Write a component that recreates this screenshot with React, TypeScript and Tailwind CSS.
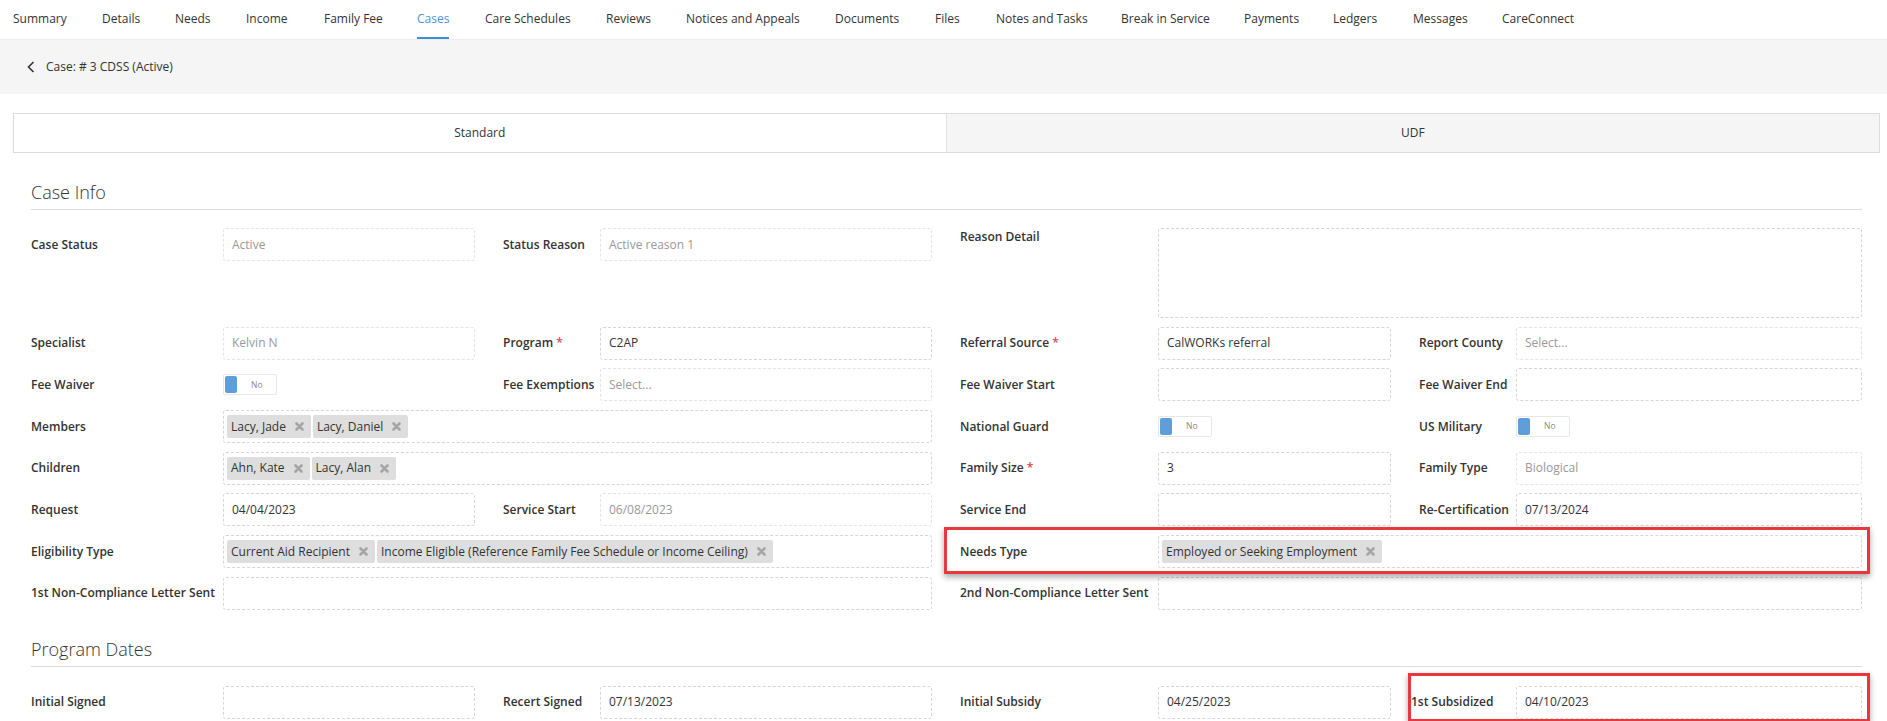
import type { ReactNode } from 'react';

type Tab = { name: string; w: string; active?: boolean };

const tabs: Tab[] = [
  { name: 'Summary', w: 'w-[89px]' },
  { name: 'Details', w: 'w-[73px]' },
  { name: 'Needs', w: 'w-[71px]' },
  { name: 'Income', w: 'w-[78px]' },
  { name: 'Family Fee', w: 'w-[93px]' },
  { name: 'Cases', w: 'w-[68px]', active: true },
  { name: 'Care Schedules', w: 'w-[121px]' },
  { name: 'Reviews', w: 'w-[80px]' },
  { name: 'Notices and Appeals', w: 'w-[149px]' },
  { name: 'Documents', w: 'w-[100px]' },
  { name: 'Files', w: 'w-[61px]' },
  { name: 'Notes and Tasks', w: 'w-[125px]' },
  { name: 'Break in Service', w: 'w-[123px]' },
  { name: 'Payments', w: 'w-[89px]' },
  { name: 'Ledgers', w: 'w-[80px]' },
  { name: 'Messages', w: 'w-[89px]' },
  { name: 'CareConnect', w: 'w-[100px]' },
];

function XIcon() {
  return (
    <svg width="9" height="9" viewBox="0 0 9 9" className="shrink-0">
      <path d="M1.5 1.5 L7.5 7.5 M7.5 1.5 L1.5 7.5" stroke="#a5a5a5" strokeWidth="2.6" strokeLinecap="round" />
    </svg>
  );
}

function Chip({ text }: { text: string }) {
  return (
    <span className="flex h-[23px] items-center gap-[9px] rounded-[2px] bg-[#dedede] pl-[4px] pr-[7px] whitespace-nowrap text-[#333]">
      {text}
      <XIcon />
    </span>
  );
}

function Toggle() {
  return (
    <div className="flex h-[21px] w-[54px] items-center rounded-[2px] border border-[#e8e8e8] bg-white">
      <span className="ml-[1px] h-[17px] w-[12px] rounded-[2px] bg-[#5f9ed8]" />
      <span className="ml-[14px] text-[8.5px] text-[#888]">No</span>
    </div>
  );
}

function Box({ children, muted, tall, chips }: { children?: ReactNode; muted?: boolean; tall?: boolean; chips?: boolean }) {
  return (
    <div
      className={`flex rounded-[3px] border border-dashed ${tall ? 'h-[90px] items-start' : 'h-[33px] items-center'} ${
        chips ? 'gap-[2px] pl-[3px]' : 'px-[8px]'
      } ${muted ? 'border-[#e4e4e4] text-[#999]' : 'border-[#d6d6d6] text-[#333]'}`}
    >
      {children}
    </div>
  );
}

function Field({
  label,
  lw,
  req,
  span,
  top,
  children,
}: {
  label: string;
  lw: string;
  req?: boolean;
  span?: boolean;
  top?: boolean;
  children?: ReactNode;
}) {
  return (
    <div className={`flex ${top ? 'items-start' : 'items-center'} ${span ? 'col-span-2' : ''}`}>
      <div className={`${lw} shrink-0 whitespace-nowrap font-semibold leading-[18px] text-[#333]`}>
        {label}
        {req && <span className="ml-[3px] text-[#e0474c]">*</span>}
      </div>
      <div className="min-w-0 flex-1">{children}</div>
    </div>
  );
}

function Section({ title }: { title: string }) {
  return (
    <div className="mt-[27px] border-b border-[#dcdcdc] pb-[4px] text-[18px] font-light leading-[25px] text-[#333]">
      {title}
    </div>
  );
}

const L1 = 'w-[192px]';
const L2 = 'w-[97px]';
const L3 = 'w-[198px]';

export default function App() {
  return (
    <div className="h-screen overflow-hidden bg-white font-['Open_Sans',sans-serif] text-[12px] text-[#333]">
      <nav className="flex h-[40px] items-stretch border-b border-[#ececec] pl-[13px]">
        {tabs.map((t) => (
          <div key={t.name} className={`${t.w} flex shrink-0 items-stretch`}>
            <span
              className={`flex items-center whitespace-nowrap border-b-2 pt-[1px] ${
                t.active ? 'border-[#3c8ddc] text-[#4a93e0]' : 'border-transparent text-[#333]'
              }`}
            >
              {t.name}
            </span>
          </div>
        ))}
      </nav>

      <div className="flex h-[54px] items-center bg-[#f5f5f5] pl-[27px]">
        <svg width="8" height="12" viewBox="0 0 8 12">
          <polyline points="6.5,1 1.5,6 6.5,11" fill="none" stroke="#333" strokeWidth="1.6" />
        </svg>
        <span className="ml-[11px]">Case: # 3 CDSS (Active)</span>
      </div>

      <div className="pl-[13px] pr-[7px] pt-[19px]">
        <div className="flex h-[40px] border border-[#dcdcdc]">
          <div className="flex w-1/2 items-center justify-center border-r border-[#e2e2e2] bg-white">Standard</div>
          <div className="flex flex-1 items-center justify-center bg-[#f5f5f5]">UDF</div>
        </div>

        <div className="px-[18px]">
          <Section title="Case Info" />

          <div className="mt-[18px] grid grid-cols-[444px_429px_431px_1fr] items-start gap-x-[28px] gap-y-[8.7px]">
            <Field label="Case Status" lw={L1}>
              <Box muted>Active</Box>
            </Field>
            <Field label="Status Reason" lw={L2}>
              <Box muted>Active reason 1</Box>
            </Field>
            <Field label="Reason Detail" lw={L3} span top>
              <Box tall />
            </Field>

            <Field label="Specialist" lw={L1}>
              <Box muted>Kelvin N</Box>
            </Field>
            <Field label="Program" lw={L2} req>
              <Box>C2AP</Box>
            </Field>
            <Field label="Referral Source" lw={L3} req>
              <Box>CalWORKs referral</Box>
            </Field>
            <Field label="Report County" lw={L2}>
              <Box muted>Select...</Box>
            </Field>

            <Field label="Fee Waiver" lw={L1}>
              <div className="flex h-[33px] items-center">
                <Toggle />
              </div>
            </Field>
            <Field label="Fee Exemptions" lw={L2}>
              <Box muted>Select...</Box>
            </Field>
            <Field label="Fee Waiver Start" lw={L3}>
              <Box />
            </Field>
            <Field label="Fee Waiver End" lw={L2}>
              <Box />
            </Field>

            <Field label="Members" lw={L1} span>
              <Box chips>
                <Chip text="Lacy, Jade" />
                <Chip text="Lacy, Daniel" />
              </Box>
            </Field>
            <Field label="National Guard" lw={L3}>
              <div className="flex h-[33px] items-center">
                <Toggle />
              </div>
            </Field>
            <Field label="US Military" lw={L2}>
              <div className="flex h-[33px] items-center">
                <Toggle />
              </div>
            </Field>

            <Field label="Children" lw={L1} span>
              <Box chips>
                <Chip text="Ahn, Kate" />
                <Chip text="Lacy, Alan" />
              </Box>
            </Field>
            <Field label="Family Size" lw={L3} req>
              <Box>3</Box>
            </Field>
            <Field label="Family Type" lw={L2}>
              <Box muted>Biological</Box>
            </Field>

            <Field label="Request" lw={L1}>
              <Box>04/04/2023</Box>
            </Field>
            <Field label="Service Start" lw={L2}>
              <Box muted>06/08/2023</Box>
            </Field>
            <Field label="Service End" lw={L3}>
              <Box />
            </Field>
            <Field label="Re-Certification" lw={L2}>
              <Box>07/13/2024</Box>
            </Field>

            <Field label="Eligibility Type" lw={L1} span>
              <Box chips>
                <Chip text="Current Aid Recipient" />
                <Chip text="Income Eligible (Reference Family Fee Schedule or Income Ceiling)" />
              </Box>
            </Field>
            <div className="relative col-span-2">
              <div className="pointer-events-none absolute -bottom-[6px] -left-[16px] -right-[8px] -top-[8px] border-[3px] border-[#e8383d] shadow-[0_3px_6px_rgba(0,0,0,0.35)]" />
              <Field label="Needs Type" lw={L3}>
                <Box chips>
                  <Chip text="Employed or Seeking Employment" />
                </Box>
              </Field>
            </div>

            <Field label="1st Non-Compliance Letter Sent" lw={L1} span>
              <Box />
            </Field>
            <Field label="2nd Non-Compliance Letter Sent" lw={L3} span>
              <Box />
            </Field>
          </div>

          <Section title="Program Dates" />

          <div className="mt-[19px] grid grid-cols-[444px_429px_431px_1fr] items-start gap-x-[28px] gap-y-[8.7px]">
            <Field label="Initial Signed" lw={L1}>
              <Box />
            </Field>
            <Field label="Recert Signed" lw={L2}>
              <Box>07/13/2023</Box>
            </Field>
            <Field label="Initial Subsidy" lw={L3}>
              <Box>04/25/2023</Box>
            </Field>
            <div className="relative">
              <div className="pointer-events-none absolute -bottom-[3px] -left-[11px] -right-[8px] -top-[13px] border-[3px] border-[#e8383d] shadow-[0_3px_6px_rgba(0,0,0,0.35)]" />
              <div className="flex items-center">
                <div className="-ml-[8px] w-[105px] shrink-0 whitespace-nowrap font-semibold leading-[18px]">1st Subsidized</div>
                <div className="min-w-0 flex-1">
                  <Box>04/10/2023</Box>
                </div>
              </div>
            </div>
          </div>
        </div>
      </div>
    </div>
  );
}
